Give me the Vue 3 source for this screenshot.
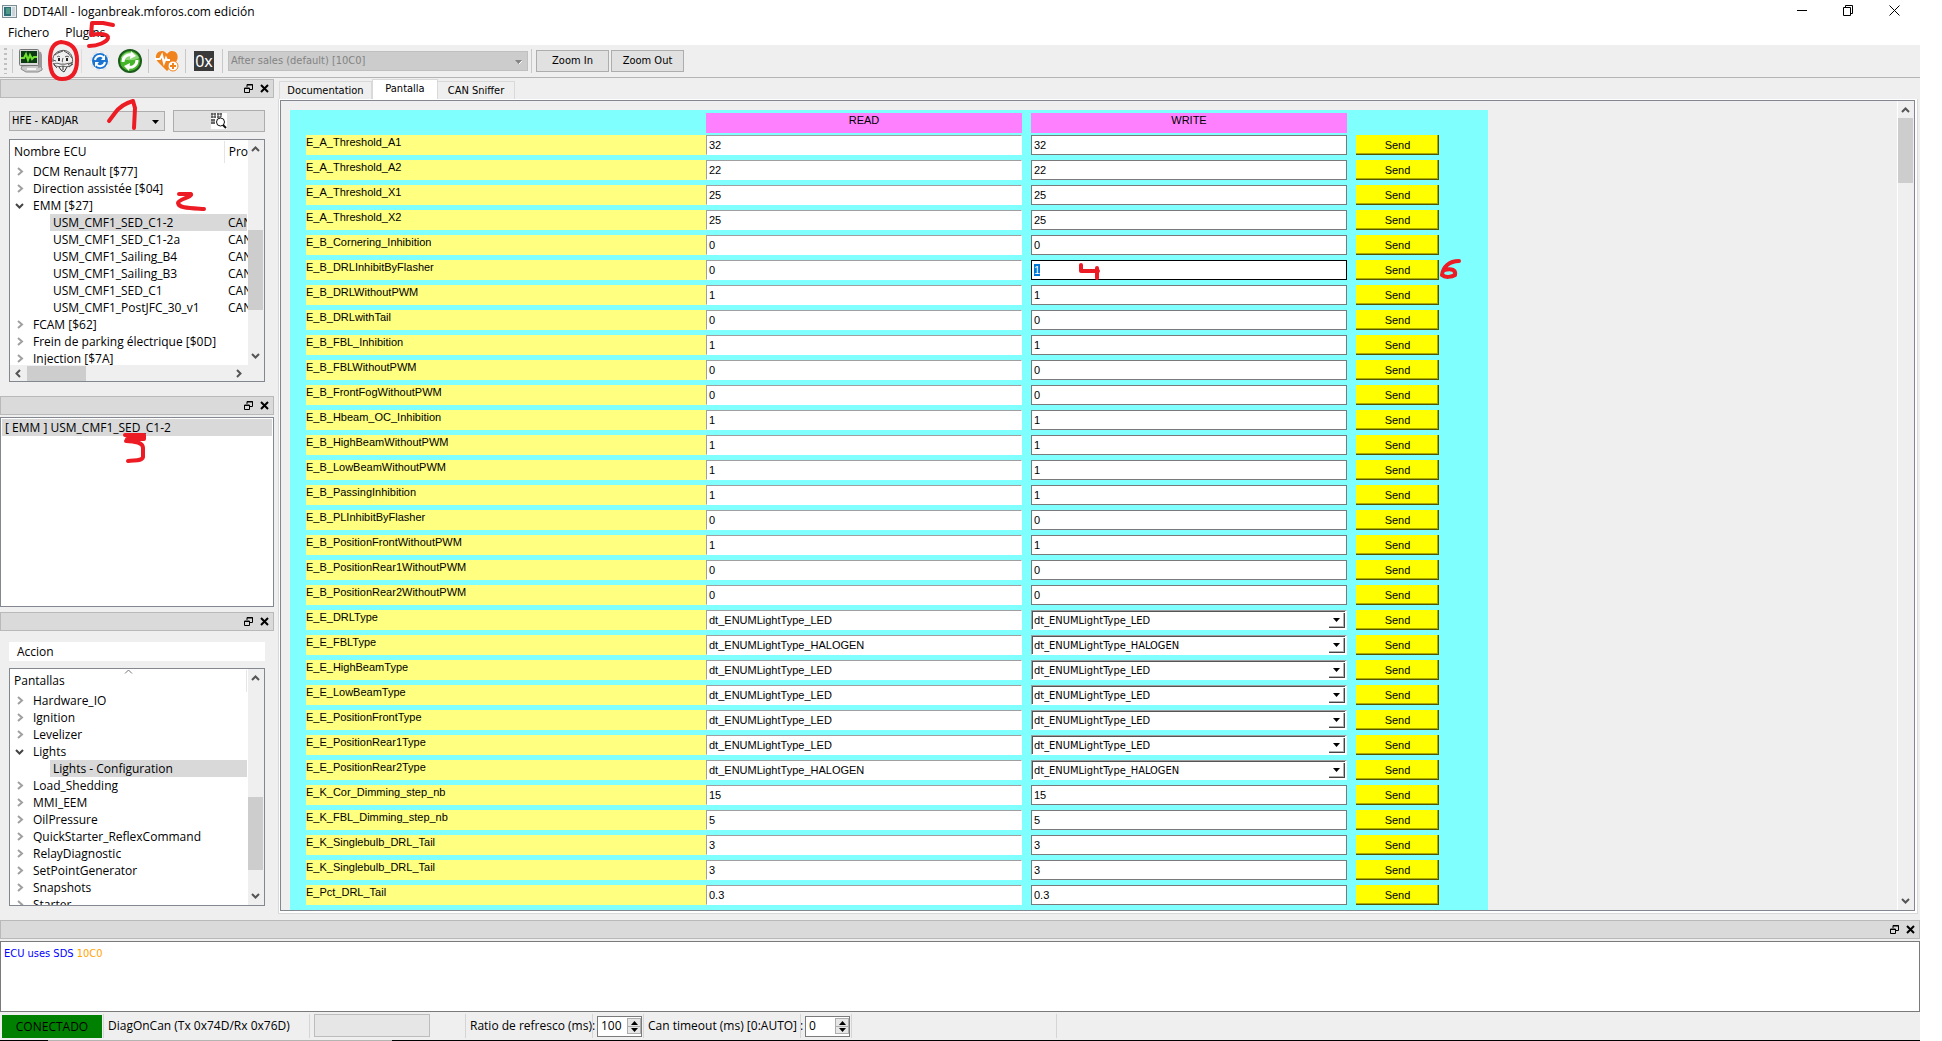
<script setup>
import { ref, onMounted } from 'vue'

const ecus = [
  { name: 'DCM Renault [$77]' },
  { name: 'Direction assistée [$04]' },
  { name: 'EMM [$27]', open: true },
  { name: 'USM_CMF1_SED_C1-2', child: true, selected: true },
  { name: 'USM_CMF1_SED_C1-2a', child: true },
  { name: 'USM_CMF1_Sailing_B4', child: true },
  { name: 'USM_CMF1_Sailing_B3', child: true },
  { name: 'USM_CMF1_SED_C1', child: true },
  { name: 'USM_CMF1_PostJFC_30_v1', child: true },
  { name: 'FCAM [$62]' },
  { name: 'Frein de parking électrique [$0D]' },
  { name: 'Injection [$7A]' }
]

const screens = [
  { name: 'Hardware_IO' },
  { name: 'Ignition' },
  { name: 'Levelizer' },
  { name: 'Lights', open: true },
  { name: 'Lights - Configuration', child: true, selected: true },
  { name: 'Load_Shedding' },
  { name: 'MMI_EEM' },
  { name: 'OilPressure' },
  { name: 'QuickStarter_ReflexCommand' },
  { name: 'RelayDiagnostic' },
  { name: 'SetPointGenerator' },
  { name: 'Snapshots' },
  { name: 'Starter' }
]

const LED = 'dt_ENUMLightType_LED'
const HALOGEN = 'dt_ENUMLightType_HALOGEN'

const rows = ref([
  ['E_A_Threshold_A1', '32'],
  ['E_A_Threshold_A2', '22'],
  ['E_A_Threshold_X1', '25'],
  ['E_A_Threshold_X2', '25'],
  ['E_B_Cornering_Inhibition', '0'],
  ['E_B_DRLInhibitByFlasher', '0', '1'],
  ['E_B_DRLWithoutPWM', '1'],
  ['E_B_DRLwithTail', '0'],
  ['E_B_FBL_Inhibition', '1'],
  ['E_B_FBLWithoutPWM', '0'],
  ['E_B_FrontFogWithoutPWM', '0'],
  ['E_B_Hbeam_OC_Inhibition', '1'],
  ['E_B_HighBeamWithoutPWM', '1'],
  ['E_B_LowBeamWithoutPWM', '1'],
  ['E_B_PassingInhibition', '1'],
  ['E_B_PLInhibitByFlasher', '0'],
  ['E_B_PositionFrontWithoutPWM', '1'],
  ['E_B_PositionRear1WithoutPWM', '0'],
  ['E_B_PositionRear2WithoutPWM', '0'],
  ['E_E_DRLType', LED],
  ['E_E_FBLType', HALOGEN],
  ['E_E_HighBeamType', LED],
  ['E_E_LowBeamType', LED],
  ['E_E_PositionFrontType', LED],
  ['E_E_PositionRear1Type', LED],
  ['E_E_PositionRear2Type', HALOGEN],
  ['E_K_Cor_Dimming_step_nb', '15'],
  ['E_K_FBL_Dimming_step_nb', '5'],
  ['E_K_Singlebulb_DRL_Tail', '3'],
  ['E_K_Singlebulb_DRL_Tail', '3'],
  ['E_Pct_DRL_Tail', '0.3']
].map(([name, read, write], i) => ({
  id: `p${i}`,
  name,
  read,
  write: write ?? read,
  isEnum: read.startsWith('dt_'),
  active: write !== undefined
})))

onMounted(() => {
  const el = document.querySelector('.field.active')
  if (el) {
    el.focus({ preventScroll: true })
    el.select()
  }
})
</script>

<template>
  <div class="window">
    <header class="titlebar">
      <svg class="appicon" width="15" height="13" viewBox="0 0 15 13">
        <rect x="0.5" y="0.5" width="14" height="12" fill="#e8eef0" stroke="#7d8f96" />
        <rect x="2" y="2" width="7" height="9" fill="#2f6f78" />
        <rect x="4" y="3" width="4" height="6" fill="#4f9a86" />
        <rect x="10" y="2" width="3" height="9" fill="#c9d3d8" />
      </svg>
      <h1>DDT4All - loganbreak.mforos.com edición</h1>
      <div class="winbtns">
        <button aria-label="Minimize"><svg width="11" height="11"><path d="M0 5.5H10" stroke="#000" /></svg></button>
        <button aria-label="Restore"><svg width="11" height="11"><path d="M.5 2.5H7.500V10.500H.5ZM2.500 2.500V.5H9.500V8.500H7.500" fill="none" stroke="#000" /></svg></button>
        <button aria-label="Close"><svg width="11" height="11"><path d="M.5 .5L10.500 10.500M10.500 .5L.5 10.500" stroke="#000" /></svg></button>
      </div>
    </header>

    <nav class="menubar">
      <button>Fichero</button>
      <button>Plugins</button>
    </nav>

    <div class="body">
      <div class="toolbar">
        <span class="grip"></span>
        <span class="vsep"></span>
        <button class="tool" aria-label="Diagnostics">
          <svg width="24" height="24" viewBox="0 0 24 24">
            <path d="M3 17L20 16L23 19V21L19 23H7L2 20Z" fill="#c9c9c9" stroke="#8b8b8b" />
            <path d="M18 2L22 3L23 6V18L19 19Z" fill="#9a9a9a" />
            <rect x="0.5" y="0.5" width="19" height="16" rx="1" fill="#d9d9d9" stroke="#777" />
            <rect x="2" y="2" width="16" height="12" fill="#0c3a12" />
            <path d="M2 9H5L7 5L9 11L11 6L13 10L15 8H18" fill="none" stroke="#6fe02f" stroke-width="2" />
            <path d="M8 20H17" stroke="#f4f4f4" stroke-width="2" />
          </svg>
        </button>
        <button class="tool expert" aria-label="Expert mode">
          <svg width="24" height="24" viewBox="0 0 24 24" fill="none" stroke="#555">
            <path d="M2 13C1 8 4 3 9 2C14 0 20 3 21 8C22 11 22 14 20 16" />
            <path d="M4 6L8 3M7 4L12 2M13 2L18 5M17 4L21 9M2 14L4 17M3 16L6 19" />
            <path d="M6 8C7 7 8 7 9 8M14 8C15 7 17 7 18 8" />
            <path d="M8 9V12M16 9V12" stroke="#222" stroke-width="2" />
            <path d="M12 9C11 12 11 13 12 13" />
            <path d="M3 15C7 13 9 16 12 15C15 16 17 13 21 15C19 18 15 18 12 17C8 18 5 18 3 15Z" />
            <path d="M8 18L10 21L13 23L16 18M12 17V21" stroke="#333" />
            <path d="M17 16L21 13M18 18L22 15M5 12L2 11" />
          </svg>
        </button>
        <span class="vsep faint"></span>
        <button class="tool auto" aria-label="Auto refresh">
          <svg width="20" height="20" viewBox="0 0 20 20">
            <circle cx="10" cy="10" r="9" fill="#fff" stroke="#e2e6ea" stroke-width="2" stroke-dasharray="4 3" />
            <circle cx="10" cy="10" r="8" fill="#1a73cf" />
            <path d="M5 9A5 5 0 0 1 14 7M15 11A5 5 0 0 1 6 13" fill="none" stroke="#fff" stroke-width="2" />
            <path d="M15 4V9H11ZM5 16V11H9Z" fill="#fff" />
          </svg>
        </button>
        <button class="tool" aria-label="Refresh">
          <svg width="24" height="24" viewBox="0 0 24 24">
            <circle cx="12" cy="12" r="11" fill="#45b52a" stroke="#1c5c1c" stroke-width="2" />
            <path d="M3 9A10 10 0 0 1 21 9C16 12 8 12 3 9Z" fill="#8fd67b" />
            <path d="M5 13A7 7 0 0 1 14 6M19 11A7 7 0 0 1 10 18" fill="none" stroke="#fff" stroke-width="3" />
            <path d="M13 2L18 7L12 10ZM11 22L6 17L12 14Z" fill="#fff" />
          </svg>
        </button>
        <span class="vsep"></span>
        <button class="tool" aria-label="Health check">
          <svg width="24" height="22" viewBox="0 0 24 22">
            <path d="M12 21L3 12C-1 8 1 1 7 1C10 1 11 3 12 4C13 3 14 1 17 1C23 1 24 8 21 12Z" fill="#f0831e" />
            <path d="M0 9H5L7 5L9 13L11 8L12 10H15" fill="none" stroke="#fff" stroke-width="2" />
            <circle cx="18" cy="16" r="5" fill="#fff" stroke="#f0831e" stroke-width="1" />
            <path d="M18 13V19M15 16H21" stroke="#f0831e" stroke-width="2" />
          </svg>
        </button>
        <span class="vsep"></span>
        <button class="tool hex">0x</button>
        <span class="vsep"></span>
        <span class="combo session">
          <select disabled aria-label="Session"><option>After sales (default) [10C0]</option></select>
          <svg class="tri" width="9" height="5"><path d="M1 0H8L4.500 4Z" fill="#848484" /><path d="M8 1L5 4" stroke="#fff" /></svg>
        </span>
        <span class="vsep tight"></span>
        <button class="push zoomb">Zoom In</button>
        <button class="push zoomb">Zoom Out</button>
      </div>

      <main class="middle">
        <aside class="docks">
          <section class="dock first">
            <div class="dockbar">
              <button aria-label="Float"><svg width="9" height="9"><path d="M.5 4H5.500V8.500H.5ZM0 4.500H6M3 3V.5H8.500V5.500H6M3 1H9" fill="none" stroke="#000" /></svg></button>
              <button aria-label="Close"><svg width="9" height="9"><path d="M1 1L8 8M8 1L1 8" stroke="#000" stroke-width="2" /></svg></button>
            </div>
            <div class="dockbody">
              <div class="pick">
                <span class="combo car">
                  <select aria-label="Vehicle"><option>HFE - KADJAR</option></select>
                  <svg class="tri" width="9" height="5"><path d="M1 0H8L4.500 4Z" /></svg>
                </span>
                <button class="push scan" aria-label="Scan ECUs">
                  <svg width="16" height="16" viewBox="0 0 16 16">
                    <rect width="16" height="16" fill="#fff" />
                    <path d="M0 1H5M0 4H5M1 0V5M4 0V5M6 1H11M6 4H10M7 0V5M10 0V4M0 7H4M0 10H4M1 6V11M3 6V11" stroke="#333" fill="none" />
                    <circle cx="9.500" cy="9" r="4" fill="#fff" stroke="#111" stroke-width="1" />
                    <path d="M12 12L15 15" stroke="#111" stroke-width="2" />
                  </svg>
                </button>
              </div>
              <div class="tree">
                <div class="treemain">
                  <div class="treeview">
                    <div class="treehead"><span class="c1">Nombre ECU</span><span class="c2">Pro</span></div>
                    <ul>
                      <li v-for="e in ecus" :key="e.name" :class="{ child: e.child, selected: e.selected }">
                        <svg v-if="e.open" class="arrow" width="9" height="6"><path d="M1 1L4.500 4.500L8 1" fill="none" stroke="#444" stroke-width="2" /></svg>
                        <svg v-else-if="!e.child" class="arrow" width="9" height="9"><path d="M3 1L7 4.500L3 8" fill="none" stroke="#a0a0a0" stroke-width="2" /></svg>
                        <span class="name">{{ e.name }}</span>
                        <span v-if="e.child" class="proto">CAN</span>
                      </li>
                    </ul>
                  </div>
                  <div class="vscroll">
                    <svg width="9" height="6"><path d="M1 5L4.500 1.500L8 5" /></svg>
                    <span class="track"><i class="ecu-thumb"></i></span>
                    <svg width="9" height="6"><path d="M1 1L4.500 4.500L8 1" /></svg>
                  </div>
                </div>
                <div class="hscroll">
                  <svg width="6" height="9"><path d="M5 1L1.500 4.500L5 8" /></svg>
                  <span class="htrack"><i></i></span>
                  <svg width="6" height="9"><path d="M1 1L4.500 4.500L1 8" /></svg>
                </div>
              </div>
            </div>
          </section>

          <section class="dock second">
            <div class="dockbar">
              <button aria-label="Float"><svg width="9" height="9"><path d="M.5 4H5.500V8.500H.5ZM0 4.500H6M3 3V.5H8.500V5.500H6M3 1H9" fill="none" stroke="#000" /></svg></button>
              <button aria-label="Close"><svg width="9" height="9"><path d="M1 1L8 8M8 1L1 8" stroke="#000" stroke-width="2" /></svg></button>
            </div>
            <ul class="openlist"><li>[ EMM ] USM_CMF1_SED_C1-2</li></ul>
          </section>

          <section class="dock third">
            <div class="dockbar">
              <button aria-label="Float"><svg width="9" height="9"><path d="M.5 4H5.500V8.500H.5ZM0 4.500H6M3 3V.5H8.500V5.500H6M3 1H9" fill="none" stroke="#000" /></svg></button>
              <button aria-label="Close"><svg width="9" height="9"><path d="M1 1L8 8M8 1L1 8" stroke="#000" stroke-width="2" /></svg></button>
            </div>
            <div class="dockbody">
              <div class="action"><button>Accion</button></div>
              <div class="tree">
                <div class="treemain">
                  <div class="treeview">
                    <div class="treehead single">
                      <span class="c1">Pantallas</span>
                      <svg class="sort" width="9" height="5"><path d="M1 4.500L4.500 1L8 4.500" fill="none" stroke="#777" /></svg>
                    </div>
                    <ul>
                      <li v-for="s in screens" :key="s.name" :class="{ child: s.child, selected: s.selected }">
                        <svg v-if="s.open" class="arrow" width="9" height="6"><path d="M1 1L4.500 4.500L8 1" fill="none" stroke="#444" stroke-width="2" /></svg>
                        <svg v-else-if="!s.child" class="arrow" width="9" height="9"><path d="M3 1L7 4.500L3 8" fill="none" stroke="#a0a0a0" stroke-width="2" /></svg>
                        <span class="name">{{ s.name }}</span>
                      </li>
                    </ul>
                  </div>
                  <div class="vscroll">
                    <svg width="9" height="6"><path d="M1 5L4.500 1.500L8 5" /></svg>
                    <span class="track"><i class="screen-thumb"></i></span>
                    <svg width="9" height="6"><path d="M1 1L4.500 4.500L8 1" /></svg>
                  </div>
                </div>
              </div>
            </div>
          </section>
        </aside>

        <section class="tabs">
          <div class="tabbar" role="tablist">
            <button role="tab" class="doc">Documentation</button>
            <button role="tab" class="current" aria-selected="true">Pantalla</button>
            <button role="tab" class="sniff">CAN Sniffer</button>
          </div>
          <div class="frame">
            <div class="scrollarea">
              <div class="viewport">
                <div class="screen">
                  <table>
                    <colgroup><col class="k-name" /><col class="k-val" /><col class="k-val" /><col class="k-send" /></colgroup>
                    <thead>
                      <tr><td></td><th scope="col"><span>READ</span></th><th scope="col"><span>WRITE</span></th><td></td></tr>
                    </thead>
                    <tbody>
                      <tr v-for="r in rows" :key="r.id">
                        <th scope="row" class="namecell"><label :for="r.id">{{ r.name }}</label></th>
                        <td><span class="read">{{ r.read }}</span></td>
                        <td>
                          <span v-if="r.isEnum" class="enum">
                            <select :id="r.id" v-model="r.write"><option>{{ LED }}</option><option>{{ HALOGEN }}</option></select>
                            <i><svg width="7" height="4"><path d="M0 0H7L3.500 4Z" /></svg></i>
                          </span>
                          <input v-else :id="r.id" v-model="r.write" type="text" class="field" :class="{ active: r.active }" />
                        </td>
                        <td><button class="send">Send</button></td>
                      </tr>
                    </tbody>
                  </table>
                </div>
              </div>
              <div class="vscroll main">
                <svg width="9" height="6"><path d="M1 5L4.500 1.500L8 5" /></svg>
                <span class="track"><i class="main-thumb"></i></span>
                <svg width="9" height="6"><path d="M1 1L4.500 4.500L8 1" /></svg>
              </div>
            </div>
          </div>
        </section>
      </main>

      <section class="logdock">
        <div class="dockbar">
          <button aria-label="Float"><svg width="9" height="9"><path d="M.5 4H5.500V8.500H.5ZM0 4.500H6M3 3V.5H8.500V5.500H6M3 1H9" fill="none" stroke="#000" /></svg></button>
          <button aria-label="Close"><svg width="9" height="9"><path d="M1 1L8 8M8 1L1 8" stroke="#000" stroke-width="2" /></svg></button>
        </div>
        <div class="log"><span class="blue">ECU uses SDS</span> <span class="orange">10C0</span></div>
      </section>

      <footer class="status">
        <span class="connected">CONECTADO</span>
        <span class="cell diag">DiagOnCan (Tx 0x74D/Rx 0x76D)</span>
        <span class="cell bar"><i></i></span>
        <label class="cell rate" for="rate">Ratio de refresco (ms):</label>
        <span class="cell spin">
          <input id="rate" type="text" value="100" />
          <b><svg width="7" height="4"><path d="M0 4H7L3.500 0Z" /></svg><svg width="7" height="4"><path d="M0 0H7L3.500 4Z" /></svg></b>
        </span>
        <label class="cell timeout" for="timeout">Can timeout (ms) [0:AUTO] :</label>
        <span class="cell spin">
          <input id="timeout" type="text" value="0" />
          <b><svg width="7" height="4"><path d="M0 4H7L3.500 0Z" /></svg><svg width="7" height="4"><path d="M0 0H7L3.500 4Z" /></svg></b>
        </span>
        <span class="cell blank"></span>
        <span class="cell"></span>
      </footer>
    </div>
    <div class="taskedge"><i></i></div>

    <svg class="marks" width="1500" height="480" viewBox="0 0 1500 480" fill="none" stroke="#ed1c24" stroke-width="4" stroke-linecap="round" stroke-linejoin="round">
      <path d="M61 42C53 43 50 50 50 60C50 72 54 79 62 79C73 79 77 71 77 60C77 50 73 43 61 42Z" />
      <path d="M113 25L103 23H92L91 35C100 33 109 34 108 38C107 42 98 46 89 46" />
      <path d="M109 121L115 113C120 106 126 103 133 101L135 108L134 128" />
      <path d="M179 194H191C193 197 178 199 178 203C179 208 188 208 204 209" />
      <path d="M125 435H144V439H127M126 441C135 441 143 443 143 448V457C142 461 136 460 128 461" />
      <path d="M1081 265V271H1098M1097 268V278" />
      <path d="M1459 261C1449 261 1443 267 1442 275C1445 278 1452 277 1455 275C1456 270 1452 268 1444 270" />
    </svg>
  </div>
</template>

<style>
html,
body {
  margin: 0;
  background: #fff;
}
</style>

<style scoped>
* {
  box-sizing: border-box;
}
.window {
  position: relative;
  display: flex;
  flex-direction: column;
  height: 100vh;
  overflow: hidden;
  font: 12px/17px "Open Sans", "Noto Sans", sans-serif;
  color: #000;
}
button,
input,
select {
  margin: 0;
  padding: 0;
  border: 0;
  border-radius: 0;
  background: none;
  font: inherit;
  color: inherit;
  outline: none;
}
select {
  appearance: none;
}
svg {
  display: block;
}
ul {
  margin: 0;
  padding: 0;
  list-style: none;
}
.titlebar {
  display: flex;
  align-items: center;
  flex: none;
  height: 23px;
  padding: 0 42px 0 2px;
}
.titlebar h1 {
  margin: 0 0 0 6px;
  font-size: 12px;
  font-weight: 400;
}
.winbtns {
  display: flex;
  gap: 35px;
  margin-left: auto;
  margin-bottom: 3px;
}
.winbtns button {
  width: 11px;
}
.menubar {
  display: flex;
  gap: 16px;
  flex: none;
  height: 22px;
  padding: 0 8px 3px;
}
.body {
  display: flex;
  flex: 1;
  flex-direction: column;
  min-height: 0;
  margin-right: 22px;
  background: #efefef;
}
.toolbar {
  display: flex;
  align-items: center;
  flex: none;
  height: 33px;
  padding: 0 4px;
  border-bottom: 1px solid #b4b4b4;
  font: 11px/16px "DejaVu Sans Condensed", "DejaVu Sans", sans-serif;
}
.grip {
  width: 3px;
  height: 26px;
  background: repeating-linear-gradient(#c0c0c0 0 2px, transparent 2px 5px);
}
.vsep {
  width: 1px;
  height: 24px;
  margin: 0 5px;
  background: #c8c8c8;
}
.vsep.tight {
  margin: 0 4px 0 3px;
}
.tool {
  display: flex;
  align-items: center;
  justify-content: center;
  width: 24px;
  height: 24px;
  margin: 0 1px;
}
.tool.expert {
  margin-left: 7px;
}
.vsep.faint {
  margin: 0 5px;
  background: #ddd;
}
.tool.auto {
  margin-right: 5px;
}
.tool.hex {
  width: 20px;
  height: 20px;
  margin: 0 3px;
  background: #3a3a3a;
  color: #fff;
  font: 16px/22px "Noto Sans", sans-serif;
}
.combo {
  position: relative;
  display: block;
  height: 20px;
  border: 1px solid #adadad;
  background: #e1e1e1;
}
.combo select {
  display: block;
  width: 100%;
  height: 18px;
  padding: 0 16px 0 2px;
}
.combo .tri {
  position: absolute;
  right: 4px;
  top: 8px;
  pointer-events: none;
}
.session {
  width: 300px;
  border-color: #bfbfbf;
  background: #ccc;
}
.session select {
  color: #838383;
  opacity: 1;
}
.push {
  display: flex;
  align-items: center;
  justify-content: center;
  height: 22px;
  border: 1px solid #adadad;
  background: #e1e1e1;
}
.zoomb {
  width: 73px;
  margin-right: 2px;
}
.middle {
  display: flex;
  flex: 1;
  min-height: 0;
}
.docks {
  display: flex;
  flex: none;
  flex-direction: column;
  width: 274px;
  padding-top: 1px;
}
.dock {
  display: flex;
  flex-direction: column;
  min-height: 0;
}
.first {
  flex: 317 1 0;
}
.second {
  flex: 216 1 0;
}
.third {
  flex: 308 1 0;
}
.dockbar {
  display: flex;
  align-items: center;
  justify-content: flex-end;
  flex: none;
  gap: 7px;
  height: 19px;
  padding-right: 4px;
  border: 1px solid #b9b9b9;
  background: #dadada;
}
.dockbar button {
  width: 9px;
  height: 9px;
}
.dockbody {
  display: flex;
  flex: 1;
  flex-direction: column;
  min-height: 0;
  padding: 12px 9px 14px;
}
.pick {
  display: flex;
  align-items: center;
  justify-content: space-between;
  margin-bottom: 7px;
  font: 11px/16px "DejaVu Sans Condensed", "DejaVu Sans", sans-serif;
}
.car {
  width: 156px;
}
.scan {
  width: 92px;
}
.tree {
  display: flex;
  flex: 1;
  flex-direction: column;
  min-height: 0;
  border: 1px solid #828790;
  background: #fff;
}
.treemain {
  display: flex;
  flex: 1;
  min-height: 0;
}
.treeview {
  flex: 1;
  min-width: 0;
  overflow: hidden;
}
.treehead {
  position: relative;
  display: flex;
  height: 23px;
  padding-top: 1px;
  line-height: 22px;
}
.treehead .c1 {
  width: 215px;
  padding-left: 4px;
  border-right: 1px solid #e5e5e5;
}
.treehead.single .c1 {
  width: 237px;
}
.treehead .c2 {
  padding-left: 4px;
}
.sort {
  position: absolute;
  left: 48%;
  top: 0;
}
.tree li {
  display: flex;
  align-items: center;
  height: 17px;
  padding-left: 5px;
  white-space: nowrap;
}
.arrow {
  width: 9px;
}
.tree li .name {
  padding-left: 9px;
}
.tree li.child {
  margin-left: 40px;
  padding: 0;
}
.tree li.child .name {
  width: 178px;
  padding-left: 3px;
}
.tree li.selected {
  margin-right: 1px;
  background: #d9d9d9;
}
.proto {
  flex: 1;
  width: 19px;
  overflow: hidden;
}
.vscroll {
  display: flex;
  flex: none;
  flex-direction: column;
  align-items: center;
  width: 16px;
  padding: 6px 1px 6px 0;
  background: #efefef;
}
.vscroll path,
.hscroll path {
  fill: none;
  stroke: #555;
  stroke-width: 2;
}
.track {
  display: flex;
  flex: 1;
  flex-direction: column;
  width: 15px;
  margin: 5px 0;
}
.track i {
  display: block;
  background: #cdcdcd;
}
.ecu-thumb {
  height: 80px;
  margin-top: 73px;
}
.screen-thumb {
  height: 73px;
  margin-top: 111px;
}
.main-thumb {
  height: 65px;
}
.hscroll {
  display: flex;
  align-items: center;
  flex: none;
  height: 16px;
  padding: 0 22px 0 5px;
  background: #efefef;
}
.htrack {
  flex: 1;
  height: 15px;
  margin: 0 6px;
}
.htrack i {
  display: block;
  width: 59px;
  height: 15px;
  background: #cdcdcd;
}
.openlist {
  flex: 1;
  margin: 2px 0 5px;
  padding: 1px;
  border: 1px solid #828790;
  background: #fff;
}
.openlist li {
  height: 17px;
  padding-left: 3px;
  background: #d9d9d9;
}
.action {
  flex: none;
  height: 19px;
  margin-bottom: 7px;
  background: #fff;
}
.action button {
  padding: 1px 8px 0;
}
.third .dockbody {
  padding-top: 11px;
}
.tabs {
  display: flex;
  flex: 1;
  flex-direction: column;
  min-width: 0;
  padding: 1px 2px 6px 4px;
}
.tabbar {
  display: flex;
  align-items: flex-end;
  flex: none;
  height: 20px;
  padding-left: 1px;
  font: 11px/16px "DejaVu Sans Condensed", "DejaVu Sans", sans-serif;
}
.tabbar button {
  height: 18px;
  border: 1px solid #d9d9d9;
  border-bottom: 0;
}
.tabbar .doc {
  width: 93px;
}
.tabbar .current {
  width: 66px;
  height: 20px;
  padding-bottom: 2px;
  background: #fff;
}
.tabbar .sniff {
  width: 77px;
  border-left: 0;
}
.frame {
  display: flex;
  flex: 1;
  min-height: 0;
  padding: 1px 2px 2px 1px;
  border: 1px solid #d9d9d9;
  border-top: 0;
  background: #fff;
}
.scrollarea {
  display: flex;
  flex: 1;
  min-width: 0;
  border: 1px solid #828790;
}
.viewport {
  flex: 1;
  overflow: hidden;
  padding: 9px 9px 0;
  background: #efefef;
}
.main {
  width: 17px;
  border-left: 1px solid #fff;
}
.screen {
  width: 1198px;
  height: 1600px;
  padding: 3px 0 0 16px;
  background: #80ffff;
}
table {
  width: 1133px;
  table-layout: fixed;
  border-collapse: collapse;
  font: 11px/14px "Liberation Sans", Arial, sans-serif;
}
.k-name {
  width: 400px;
}
.k-val {
  width: 325px;
}
.k-send {
  width: 83px;
}
td,
th {
  height: 25px;
  padding: 0;
  vertical-align: top;
  font-weight: 400;
  text-align: left;
}
thead td,
thead th {
  height: 22px;
}
thead th span {
  display: block;
  width: 316px;
  height: 20px;
  background: #ff80ff;
  text-align: center;
}
.namecell label {
  display: block;
  height: 20px;
  background: #ffff80;
}
.read,
.field,
.enum {
  display: block;
  width: 316px;
  height: 20px;
  background: #fff;
}
.read {
  padding: 2px;
  border: 1px solid #fff;
  border-top-color: #a0a0a0;
  border-left-color: #a0a0a0;
}
.field {
  padding: 0 2px;
  border: 1px solid #7a7a7a;
}
.field.active {
  border-color: #000;
}
.field::selection {
  background: #0078d7;
  color: #fff;
}
.enum {
  position: relative;
  border: 1px solid #fff;
  border-top-color: #a0a0a0;
  border-left-color: #a0a0a0;
}
.enum select {
  display: block;
  width: 313px;
  height: 18px;
  padding: 0 20px 0 1px;
  border-top: 1px solid #555;
  border-left: 1px solid #555;
  font: 11px/16px "DejaVu Sans Condensed", "DejaVu Sans", sans-serif;
}
.enum i {
  position: absolute;
  top: 2px;
  right: 1px;
  display: flex;
  align-items: center;
  justify-content: center;
  width: 16px;
  height: 15px;
  border-right: 1px solid #444;
  border-bottom: 1px solid #444;
  box-shadow: inset -1px -1px #b0b0b0;
  pointer-events: none;
}
.send {
  display: block;
  width: 83px;
  height: 20px;
  background: #ff0;
  box-shadow: inset -1px -1px #555500, inset -2px -2px #aaaa00;
  text-align: center;
}
.logdock {
  flex: none;
}
.logdock .dockbar {
  margin-bottom: 2px;
}
.log {
  height: 71px;
  padding: 4px 3px;
  border: 1px solid #7a7a7a;
  background: #fff;
  font: 11px/16px "DejaVu Sans Condensed", "DejaVu Sans", sans-serif;
}
.blue {
  color: #00f;
}
.orange {
  color: #ffa500;
}
.status {
  display: flex;
  align-items: center;
  flex: none;
  height: 28px;
  padding-left: 2px;
}
.connected {
  width: 100px;
  height: 23px;
  margin-right: 1px;
  background: #008000;
  line-height: 23px;
  text-align: center;
}
.cell {
  height: 24px;
  padding-left: 4px;
  border-left: 1px solid #d5d5d5;
  line-height: 24px;
  white-space: nowrap;
}
.diag {
  width: 206px;
}
.bar {
  width: 156px;
}
.bar i {
  display: block;
  width: 116px;
  height: 23px;
  border: 1px solid #bcbcbc;
  background: #e6e6e6;
}
.rate {
  width: 127px;
}
.spin {
  position: relative;
  display: flex;
  align-items: center;
  width: 51px;
}
.spin input {
  width: 45px;
  height: 21px;
  padding: 0 16px 0 3px;
  border: 1px solid #7a7a7a;
  background: #fff;
}
.spin b {
  position: absolute;
  right: 2px;
  top: 4px;
  display: flex;
  flex-direction: column;
  align-items: center;
  justify-content: space-around;
  width: 14px;
  height: 16px;
  border: 1px solid #adadad;
  background: linear-gradient(#e6e6e6 7px, #adadad 7px 8px, #e6e6e6 8px);
}
.timeout {
  width: 157px;
}
.blank {
  width: 205px;
}
.taskedge {
  flex: none;
  height: 1px;
  padding-left: 48px;
  margin-right: 22px;
  background: #000;
}
.taskedge i {
  display: block;
  width: 344px;
  height: 1px;
  background: #b4b4b4;
}
.marks {
  position: absolute;
  left: 0;
  top: 0;
  pointer-events: none;
}
</style>
